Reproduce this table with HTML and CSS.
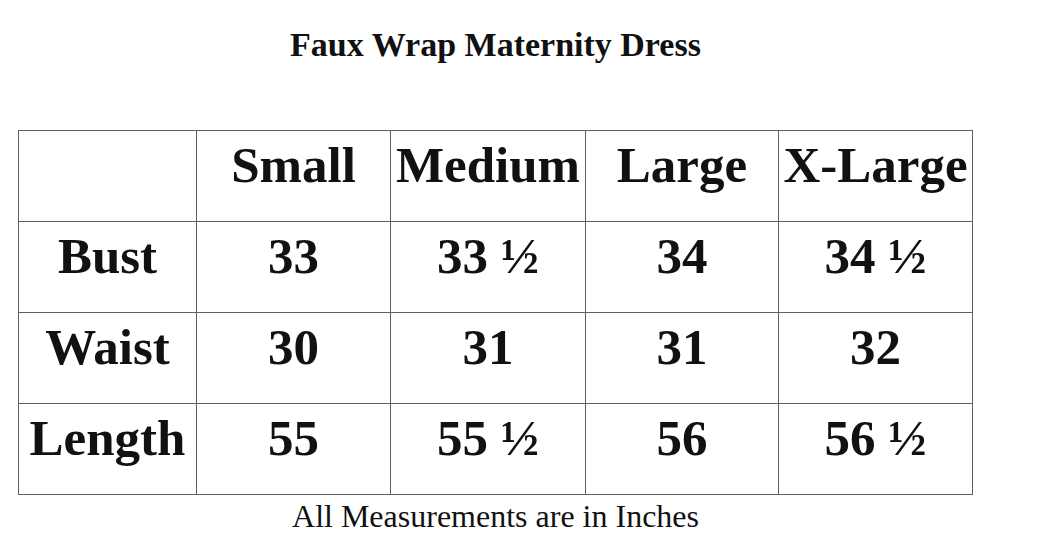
FILE: index.html
```html
<!DOCTYPE html>
<html>
<head>
<meta charset="utf-8">
<link rel="stylesheet" href="styles.css">
</head>
<body>
<div class="page">
  <h1 class="title">Faux Wrap Maternity Dress</h1>
  <div class="chart">
    <div class="cell"></div>
    <div class="cell">Small</div>
    <div class="cell">Medium</div>
    <div class="cell">Large</div>
    <div class="cell">X-Large</div>

    <div class="cell">Bust</div>
    <div class="cell">33</div>
    <div class="cell">33 ½</div>
    <div class="cell">34</div>
    <div class="cell">34 ½</div>

    <div class="cell">Waist</div>
    <div class="cell">30</div>
    <div class="cell">31</div>
    <div class="cell">31</div>
    <div class="cell">32</div>

    <div class="cell">Length</div>
    <div class="cell">55</div>
    <div class="cell">55 ½</div>
    <div class="cell">56</div>
    <div class="cell">56 ½</div>
  </div>
  <p class="note">All Measurements are in Inches</p>
</div>
</body>
</html>
```

FILE: styles.css
```css
html, body {
  margin: 0;
  padding: 0;
  background: #ffffff;
}

body {
  font-family: "Liberation Serif", "Times New Roman", serif;
  color: #111111;
}

.page {
  width: 955px;
  margin-left: 18px;
  padding-top: 25px;
}

.title {
  margin: 0 0 65px 0;
  font-size: 34px;
  line-height: 40px;
  font-weight: bold;
  text-align: center;
}

.chart {
  display: grid;
  grid-template-columns: 178px 194px 195px 193px 194px;
  grid-auto-rows: 91px;
  border-top: 1px solid #5f5f5f;
  border-left: 1px solid #5f5f5f;
}

.cell {
  border-right: 1px solid #5f5f5f;
  border-bottom: 1px solid #5f5f5f;
  padding-top: 9px;
  text-align: center;
  font-size: 51px;
  font-weight: bold;
  line-height: 1;
  white-space: nowrap;
}

.note {
  margin: 3px 0 0 0;
  font-size: 32px;
  line-height: 36px;
  text-align: center;
}
```
